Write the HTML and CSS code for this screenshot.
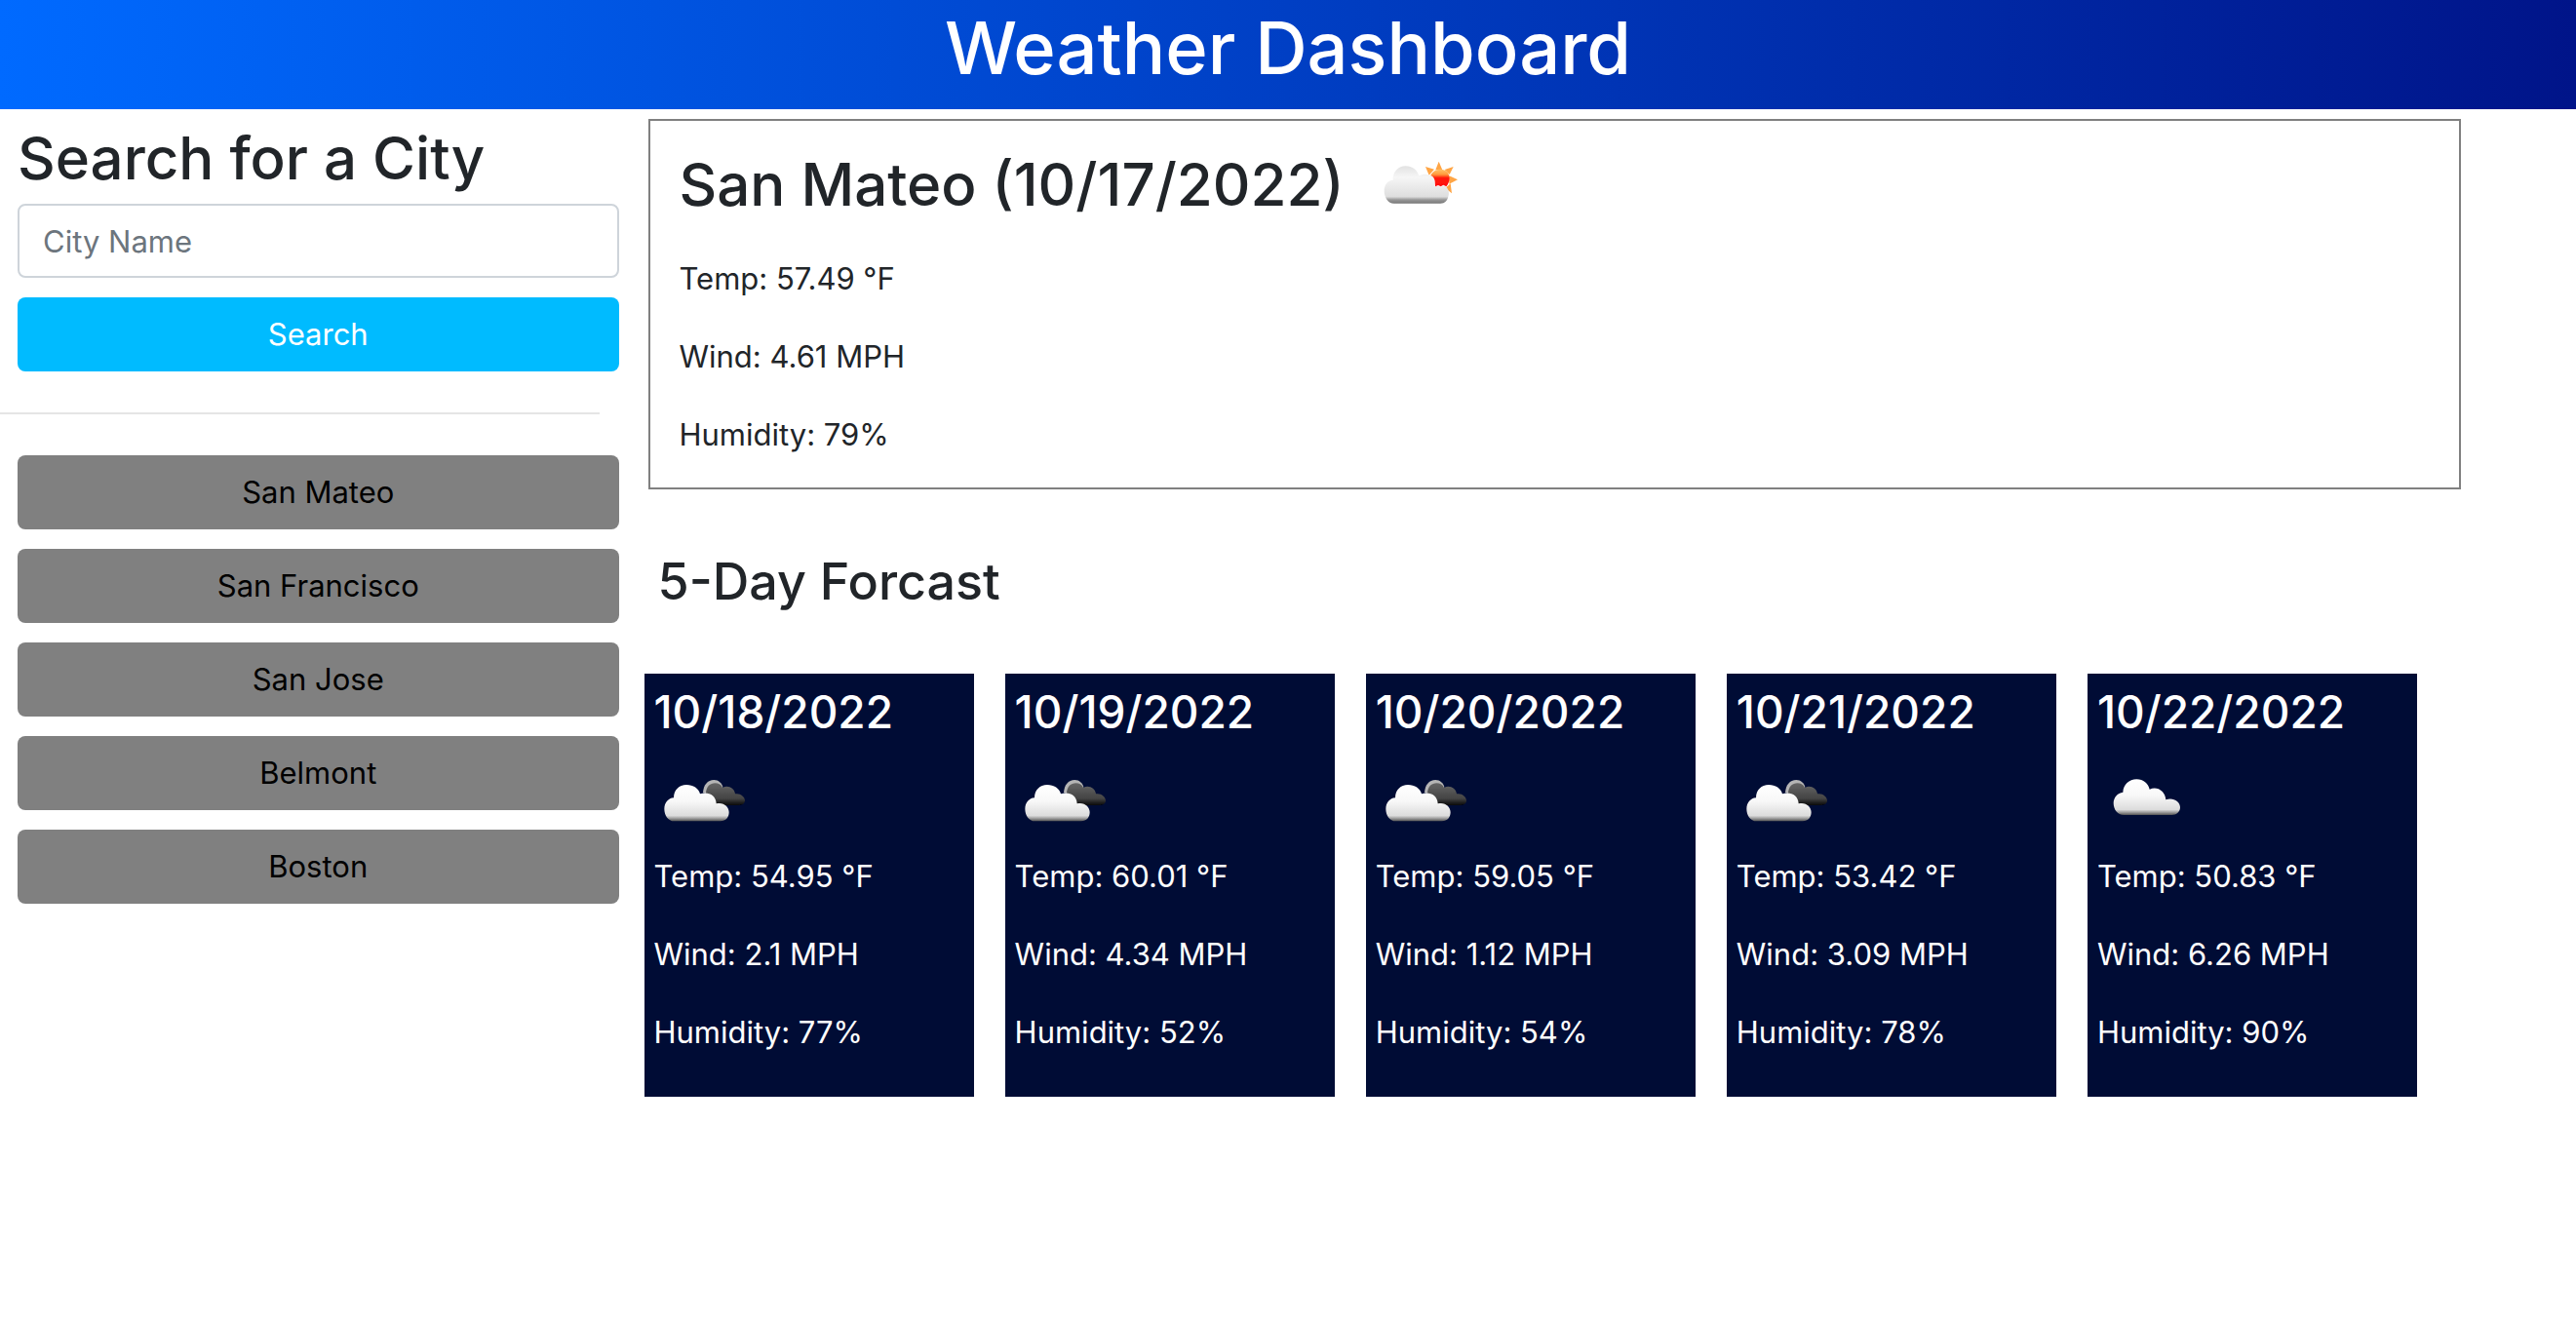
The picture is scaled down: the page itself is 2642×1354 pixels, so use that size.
FILE: index.html
```html
<!DOCTYPE html>
<html lang="en">
<head>
<meta charset="utf-8">
<meta name="viewport" content="width=device-width, initial-scale=1">
<title>Weather Dashboard</title>
<link rel="stylesheet" href="styles.css">
</head>
<body>
<svg class="defs" aria-hidden="true">
  <defs>
    <linearGradient id="white-cloud" x1="0" y1="0" x2="0" y2="1">
      <stop offset="0" stop-color="#fff"/>
      <stop offset=".45" stop-color="#f8f8f8"/>
      <stop offset=".85" stop-color="#dcdcdc"/>
      <stop offset=".92" stop-color="#a0a0a0"/>
      <stop offset="1" stop-color="#555"/>
    </linearGradient>
    <linearGradient id="day-cloud" x1="0" y1="0" x2="0" y2="1">
      <stop offset="0" stop-color="#e2e2e2"/>
      <stop offset=".3" stop-color="#f6f6f6"/>
      <stop offset=".82" stop-color="#dedede"/>
      <stop offset=".9" stop-color="#999"/>
      <stop offset="1" stop-color="#777"/>
    </linearGradient>
    <linearGradient id="dark-cloud" x1="0" y1="0" x2="0" y2="1">
      <stop offset="0" stop-color="#666"/>
      <stop offset=".7" stop-color="#444"/>
      <stop offset="1" stop-color="#050505"/>
    </linearGradient>
    <linearGradient id="sun" x1="0" y1="0" x2="0" y2="1">
      <stop offset="0" stop-color="#ffc46a"/>
      <stop offset=".3" stop-color="#ff9a3c"/>
      <stop offset=".5" stop-color="#ff1a0a"/>
      <stop offset="1" stop-color="#ff0d0d"/>
    </linearGradient>
    <filter id="soft" x="-10%" y="-10%" width="120%" height="120%"><feGaussianBlur stdDeviation="2"/></filter>
    <symbol id="broken-clouds" viewBox="0 0 300 300">
      <g filter="url(#soft)" transform="translate(0 27)">
        <path fill="#b5b5b5" d="M150 100C151 76 164 60 184 60C198 60 208 70 211 82L200 110Z"/>
        <path fill="url(#dark-cloud)" d="M159 102C160 80 172 70 187 70C198 70 207 76 210 84C226 75 246 84 249 103C264 100 279 111 279 124C279 133 270 138 260 138H190Z"/>
        <path fill="url(#white-cloud)" d="M62 187C42 187 31 168 31 149C31 131 43 116 60 115C60 91 77 75 99 75C120 75 137 86 141 103C165 95 190 106 191 133C213 127 230 142 230 160C230 175 220 187 204 187Z"/>
      </g>
    </symbol>
    <symbol id="scattered-clouds" viewBox="0 0 300 300">
      <g filter="url(#soft)" transform="translate(-60 -3)">
        <path fill="url(#white-cloud)" d="M142 198C122 198 110 180 110 161C110 145 122 130 139 128C140 105 158 88 181 88C202 88 217 101 221 119C244 108 269 124 271 151C292 142 315 156 315 174C315 188 304 198 289 198Z"/>
      </g>
    </symbol>
    <symbol id="few-clouds" viewBox="0 0 300 300">
      <g filter="url(#soft)" transform="translate(-36 0)">
        <g fill="#ffa544">
          <path d="M254 80L265 106H244ZM213 96L240 104L224 122ZM299 96L287 120L272 105ZM312 136L286 149V124ZM294 178L274 162L290 148Z"/>
        </g>
        <path fill="url(#day-cloud)" d="M116 209C98 209 86 190 86 170C86 151 97 138 113 137C112 111 130 94 152 94C173 94 188 107 193 124C209 115 232 119 241 135V157L252 155L260 159L268 154L277 158C285 166 287 177 283 188C280 200 273 209 259 209Z"/>
        <path fill="url(#sun)" d="M229 123C235 110 246 104 259 104C277 104 287 117 287 131C287 141 283 149 277 157L268 152L260 157L252 153L243 157L242 140C240 131 236 125 229 123Z"/>
      </g>
    </symbol>
  </defs>
</svg>

<header class="page-header">
  <h1>Weather Dashboard</h1>
</header>

<div class="layout">
  <aside class="sidebar">
    <form class="search">
      <h2><label for="city">Search for a City</label></h2>
      <input class="control" id="city" type="text" placeholder="City Name">
      <button class="control primary" type="button">Search</button>
    </form>
    <hr>
    <div class="history">
      <button class="control" type="button">San Mateo</button>
      <button class="control" type="button">San Francisco</button>
      <button class="control" type="button">San Jose</button>
      <button class="control" type="button">Belmont</button>
      <button class="control" type="button">Boston</button>
    </div>
  </aside>

  <main class="weather">
    <section class="today">
      <div class="today-title">
        <h2>San Mateo (10/17/2022)</h2>
        <svg class="icon" role="img" aria-label="Few clouds"><use href="#few-clouds"/></svg>
      </div>
      <p>Temp: 57.49 °F</p>
      <p>Wind: 4.61 MPH</p>
      <p>Humidity: 79%</p>
    </section>

    <h3>5-Day Forcast</h3>

    <section class="forecast">
      <article class="day">
        <h4>10/18/2022</h4>
        <svg class="icon" role="img" aria-label="Broken clouds"><use href="#broken-clouds"/></svg>
        <p>Temp: 54.95 °F</p>
        <p>Wind: 2.1 MPH</p>
        <p>Humidity: 77%</p>
      </article>
      <article class="day">
        <h4>10/19/2022</h4>
        <svg class="icon" role="img" aria-label="Broken clouds"><use href="#broken-clouds"/></svg>
        <p>Temp: 60.01 °F</p>
        <p>Wind: 4.34 MPH</p>
        <p>Humidity: 52%</p>
      </article>
      <article class="day">
        <h4>10/20/2022</h4>
        <svg class="icon" role="img" aria-label="Broken clouds"><use href="#broken-clouds"/></svg>
        <p>Temp: 59.05 °F</p>
        <p>Wind: 1.12 MPH</p>
        <p>Humidity: 54%</p>
      </article>
      <article class="day">
        <h4>10/21/2022</h4>
        <svg class="icon" role="img" aria-label="Broken clouds"><use href="#broken-clouds"/></svg>
        <p>Temp: 53.42 °F</p>
        <p>Wind: 3.09 MPH</p>
        <p>Humidity: 78%</p>
      </article>
      <article class="day">
        <h4>10/22/2022</h4>
        <svg class="icon" role="img" aria-label="Scattered clouds"><use href="#scattered-clouds"/></svg>
        <p>Temp: 50.83 °F</p>
        <p>Wind: 6.26 MPH</p>
        <p>Humidity: 90%</p>
      </article>
    </section>
  </main>
</div>
</body>
</html>
```
FILE: styles.css
```css
* {
  box-sizing: border-box;
}

body {
  margin: 0;
  background: #fff;
  color: #212529;
  font-family: Inter, "Liberation Sans", sans-serif;
  font-size: 31px;
  line-height: 48px;
}

h1, h2, h3, h4, p {
  margin: 0;
}

h1, h2, h3, h4 {
  font-weight: 500;
}

h1 {
  font-size: 74px;
  line-height: 98px;
}

h2 {
  font-size: 60px;
  line-height: 76px;
}

h3 {
  font-size: 52px;
  line-height: 68px;
}

h4 {
  font-size: 46px;
  line-height: 58px;
}

.defs {
  position: absolute;
  width: 0;
  height: 0;
}

.page-header {
  padding-bottom: 14px;
  background: linear-gradient(to right, #006aff, #001489);
  color: #fff;
  text-align: center;
}

.layout {
  display: grid;
  grid-template-columns: 1fr 3fr;
}

.search,
.history {
  display: flex;
  flex-direction: column;
  gap: 20px;
  padding: 0 26px 0 18px;
}

.search {
  padding-top: 12px;
}

.search h2 {
  margin-bottom: -11px;
}

.control {
  width: 100%;
  height: 76px;
  padding: 0 24px;
  border: 0;
  border-radius: 8px;
  background: #808080;
  color: #000;
  font: inherit;
}

input.control {
  border: 2px solid #ced4da;
  background: #fff;
}

input.control::placeholder {
  color: #6c757d;
  opacity: 1;
}

.control.primary {
  background: #00bbff;
  color: #fff;
}

hr {
  height: 2px;
  margin: 42px 46px 42px 0;
  border: 0;
  background: #e5e5e5;
}

.weather {
  padding: 10px 118px 0 0;
}

.today {
  margin-left: 4px;
  padding: 24px 30px 30px;
  border: 2px solid #808080;
}

.today-title {
  display: flex;
  align-items: center;
  gap: 24px;
  height: 82px;
}

.today p {
  margin-top: 32px;
}

.weather h3 {
  margin: 61px 14px 60px;
}

.forecast {
  display: grid;
  grid-template-columns: repeat(5, 1fr);
  gap: 32px;
  margin-right: 45px;
}

.day {
  padding: 10px 10px 42px;
  background: #000c35;
  color: #fff;
}

.icon {
  display: block;
  width: 100px;
  height: 100px;
}

.day .icon {
  margin: 12px 0 4px;
}

.day p + p {
  margin-top: 32px;
}
```
